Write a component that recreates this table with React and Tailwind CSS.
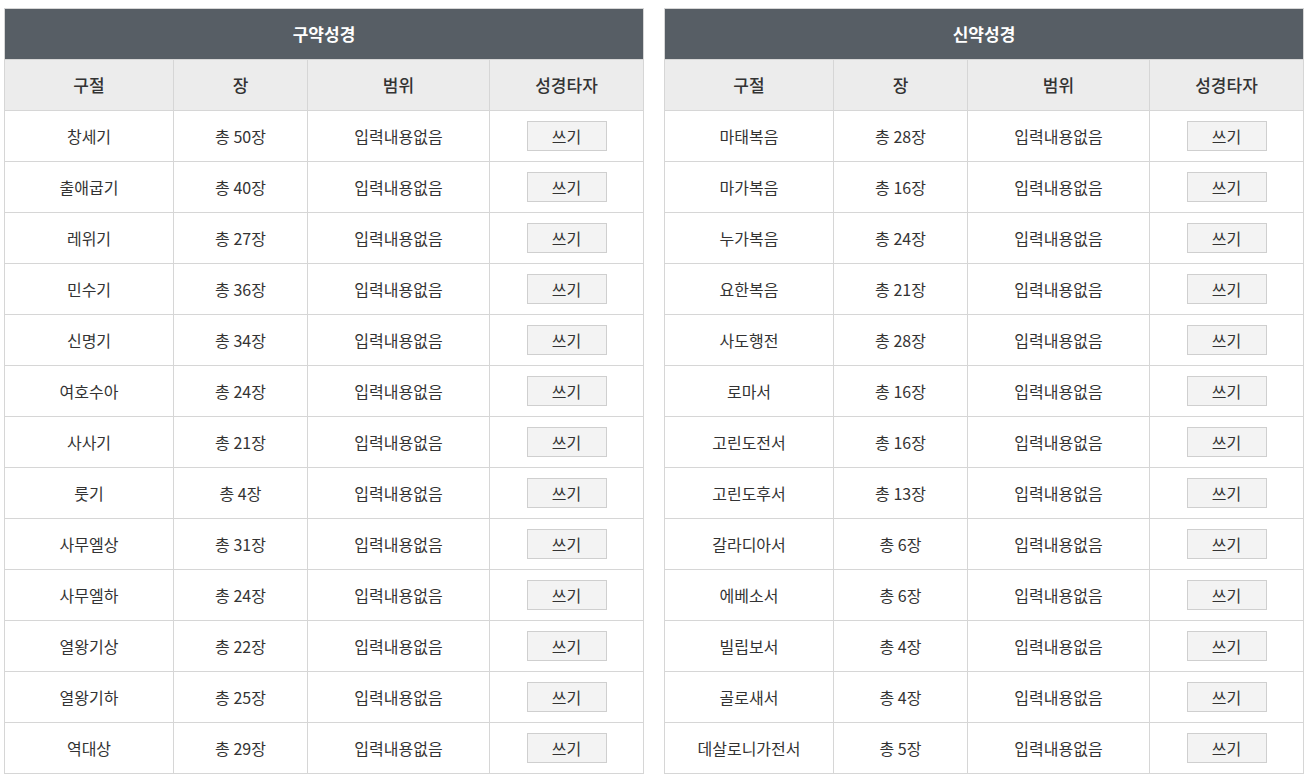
const OLD = [
  ["창세기", 50], ["출애굽기", 40], ["레위기", 27], ["민수기", 36], ["신명기", 34],
  ["여호수아", 24], ["사사기", 21], ["룻기", 4], ["사무엘상", 31], ["사무엘하", 24],
  ["열왕기상", 22], ["열왕기하", 25], ["역대상", 29],
];
const NEW = [
  ["마태복음", 28], ["마가복음", 16], ["누가복음", 24], ["요한복음", 21], ["사도행전", 28],
  ["로마서", 16], ["고린도전서", 16], ["고린도후서", 13], ["갈라디아서", 6], ["에베소서", 6],
  ["빌립보서", 4], ["골로새서", 4], ["데살로니가전서", 5],
];

function BibleTable({ title, rows }) {
  return (
    <table className="w-[639px] table-fixed border-collapse border border-[#d6d6d6] text-[16px] text-[#333]">
      <colgroup>
        <col className="w-[169px]" />
        <col className="w-[134px]" />
        <col className="w-[182px]" />
        <col className="w-[154px]" />
      </colgroup>
      <thead>
        <tr className="h-[51px]">
          <th colSpan={4} className="bg-[#575e65] text-white text-[17px] font-bold p-0 border border-[#d6d6d6]">
            {title}
          </th>
        </tr>
        <tr className="h-[51px] bg-[#ececec]">
          {["구절", "장", "범위", "성경타자"].map((h) => (
            <th key={h} className="border border-[#d6d6d6] font-medium text-[17px] text-[#333] p-0">
              {h}
            </th>
          ))}
        </tr>
      </thead>
      <tbody>
        {rows.map(([name, n]) => (
          <tr key={name} className="h-[51px]">
            <td className="border border-[#d6d6d6] text-center p-0">{name}</td>
            <td className="border border-[#d6d6d6] text-center p-0">총 {n}장</td>
            <td className="border border-[#d6d6d6] text-center p-0">입력내용없음</td>
            <td className="border border-[#d6d6d6] text-center p-0">
              <button className="w-[80px] h-[30px] bg-[#f3f3f3] border border-[#cfcfcf] text-[16px] text-[#333] leading-none align-middle">
                쓰기
              </button>
            </td>
          </tr>
        ))}
      </tbody>
    </table>
  );
}

export default function App() {
  return (
    <div
      className="min-h-[776px] bg-white pt-2 pl-1 flex gap-5 items-start"
      style={{ fontFamily: '"Noto Sans CJK KR", "Noto Sans", sans-serif' }}
    >
      <BibleTable title="구약성경" rows={OLD} />
      <BibleTable title="신약성경" rows={NEW} />
    </div>
  );
}
